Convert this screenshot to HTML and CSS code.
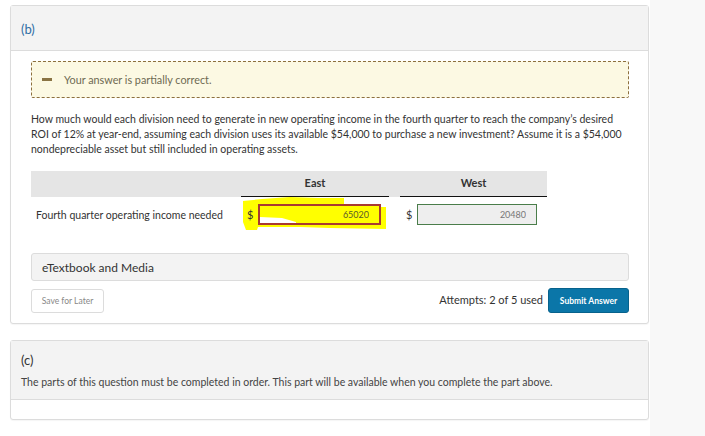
FILE: index.html
```html
<!DOCTYPE html>
<html lang="en">
<head>
<meta charset="utf-8">
<title>Question</title>
<link rel="stylesheet" href="styles.css">
</head>
<body>
<div class="page">
  <main class="main">
    <section class="card">
      <header class="card-head"><span class="part-label">(b)</span></header>
      <div class="card-body">
        <div class="feedback"><span class="minus"></span><span class="feedback-text">Your answer is partially correct.</span></div>
        <p class="question">How much would each division need to generate in new operating income in the fourth quarter to reach the company’s desired<br>ROI of 12% at year-end, assuming each division uses its available $54,000 to purchase a new investment? Assume it is a $54,000<br>nondepreciable asset but still included in operating assets.</p>
        <div class="answer-table">
          <div class="thead">
            <div class="th-blank"></div>
            <div class="th">East</div>
            <div class="th-gap"></div>
            <div class="th">West</div>
          </div>
          <div class="trow">
            <div class="row-label">Fourth quarter operating income needed</div>
            <div class="cell cell-east">
              <svg class="highlight" width="150" height="36" viewBox="241 195 150 36" aria-hidden="true">
                <path d="M243,200 L262,198 L290,196 L318,197 L344,197 L344,203 L381,203 L381,206 L386,206 L386,228 L330,227 L300,226 L258,226 L257,229 L246,229 L243,221 Z" fill="#ffff00"/>
                <path d="M260,216 L282,217 L296,221 L296,223 L260,223 Z" fill="#ffffff"/>
              </svg>
              <span class="dollar">$</span><input class="num num-wrong" type="text" value="65020">
            </div>
            <div class="th-gap"></div>
            <div class="cell cell-west">
              <span class="dollar">$</span><input class="num num-right" type="text" value="20480">
            </div>
          </div>
        </div>
        <div class="media">eTextbook and Media</div>
        <div class="actions">
          <button class="btn-save" type="button">Save for Later</button>
          <div class="submit-group">
            <span class="attempts">Attempts: 2 of 5 used</span>
            <button class="btn-submit" type="button">Submit Answer</button>
          </div>
        </div>
      </div>
    </section>
    <section class="card card-c">
      <header class="card-head-c">
        <div class="part-label-c">(c)</div>
        <div class="locked">The parts of this question must be completed in order. This part will be available when you complete the part above.</div>
      </header>
      <div class="card-foot"></div>
    </section>
  </main>
  <aside class="side"></aside>
</div>
</body>
</html>
```

FILE: styles.css
```css
* { box-sizing: border-box; }
html, body { margin: 0; padding: 0; }
body {
  font-family: Lato, "Open Sans", "Liberation Sans", sans-serif;
  color: #333;
  background: #fff;
  width: 705px;
  height: 436px;
  overflow: hidden;
}
.page { display: flex; height: 436px; }
.main {
  width: 650px;
  background: #fff;
  padding: 5px 1px 0 10px;
}
.side { flex: 1; background: #f8f8f8; }

.card {
  border: 1px solid #dcdcdc;
  border-radius: 3px;
  background: #fff;
  box-shadow: 0 1px 1px rgba(0,0,0,0.04);
}
.card-head {
  height: 45px;
  background: #f3f3f3;
  border-bottom: 1px solid #dcdcdc;
  padding: 12px 0 0 10px;
}
.part-label { color: #2f6ea5; font-size: 13px; }
.card-body { padding: 10px 19px 10px 20px; }

.feedback {
  height: 37px;
  border: 1px dashed #8c6f3e;
  background: #fcf9e3;
  border-radius: 2px;
  display: flex;
  align-items: center;
  padding-left: 10px;
}
.minus { width: 10px; height: 3px; background: #8a7444; margin-right: 12px; }
.feedback-text { color: #6e6a52; font-size: 10.8px; }

.question {
  margin: 14px 0 14px;
  font-size: 10.5px;
  line-height: 15px;
  color: #333;
}

.answer-table { width: 516px; }
.thead {
  display: grid;
  grid-template-columns: 210px 148px 11px 147px;
  height: 26px;
  background: #e5e5e5;
}
.th {
  border-bottom: 1px solid #111;
  text-align: center;
  font-weight: bold;
  font-size: 11px;
  padding-top: 5px;
  color: #333;
}
.trow {
  display: grid;
  grid-template-columns: 210px 148px 11px 147px;
  margin-top: 7px;
  height: 21px;
  align-items: center;
}
.row-label { padding-left: 5px; font-size: 10.5px; }
.cell { display: flex; align-items: center; position: relative; height: 21px; }
.cell-east { padding-left: 6px; }
.cell-west { padding-left: 6px; }
.dollar { font-size: 11px; width: 11px; position: relative; z-index: 1; }
.highlight { position: absolute; left: 0; top: -8px; z-index: 0; }
.num {
  height: 21px;
  font-family: Lato, "Open Sans", "Liberation Sans", sans-serif;
  font-size: 9px;
  text-align: right;
  padding: 0 10px 0 4px;
  position: relative;
  z-index: 1;
}
.num-wrong {
  width: 123px;
  border: 2px solid #a83a32;
  background: transparent;
  color: #5a5a2a;
}
.num-right {
  width: 120px;
  border: 1px solid #4a7d4a;
  background: #eeeeee;
  color: #777;
}

.media {
  margin-top: 28px;
  height: 28px;
  background: #f3f3f3;
  border: 1px solid #dcdcdc;
  border-radius: 3px;
  font-size: 12px;
  padding: 6px 0 0 10px;
  color: #333;
}
.actions {
  margin-top: 7px;
  display: flex;
  justify-content: space-between;
  align-items: center;
}
.btn-save {
  width: 73px;
  height: 24px;
  margin-top: 1px;
  background: #fff;
  border: 1px solid #dcdcdc;
  border-radius: 3px;
  font-family: Lato, "Open Sans", "Liberation Sans", sans-serif;
  font-size: 8.5px;
  color: #888;
  padding: 0;
}
.submit-group { display: flex; align-items: center; gap: 5px; }
.attempts { font-size: 11px; color: #333; margin-top: -2px; }
.btn-submit {
  width: 81px;
  height: 25px;
  background: #0b76a8;
  border: 1px solid #07628c;
  border-radius: 3px;
  color: #fff;
  font-family: Lato, "Open Sans", "Liberation Sans", sans-serif;
  font-weight: bold;
  font-size: 8.5px;
  padding: 0;
}

.card-c { margin-top: 16px; }
.card-head-c {
  height: 59px;
  background: #f3f3f3;
  border-bottom: 1px solid #dcdcdc;
  padding: 11px 0 0 10px;
}
.part-label-c { font-size: 13px; color: #333; line-height: 16px; }
.locked { font-size: 10.5px; color: #444; margin-top: 8px; }
.card-foot { height: 19px; }
```
